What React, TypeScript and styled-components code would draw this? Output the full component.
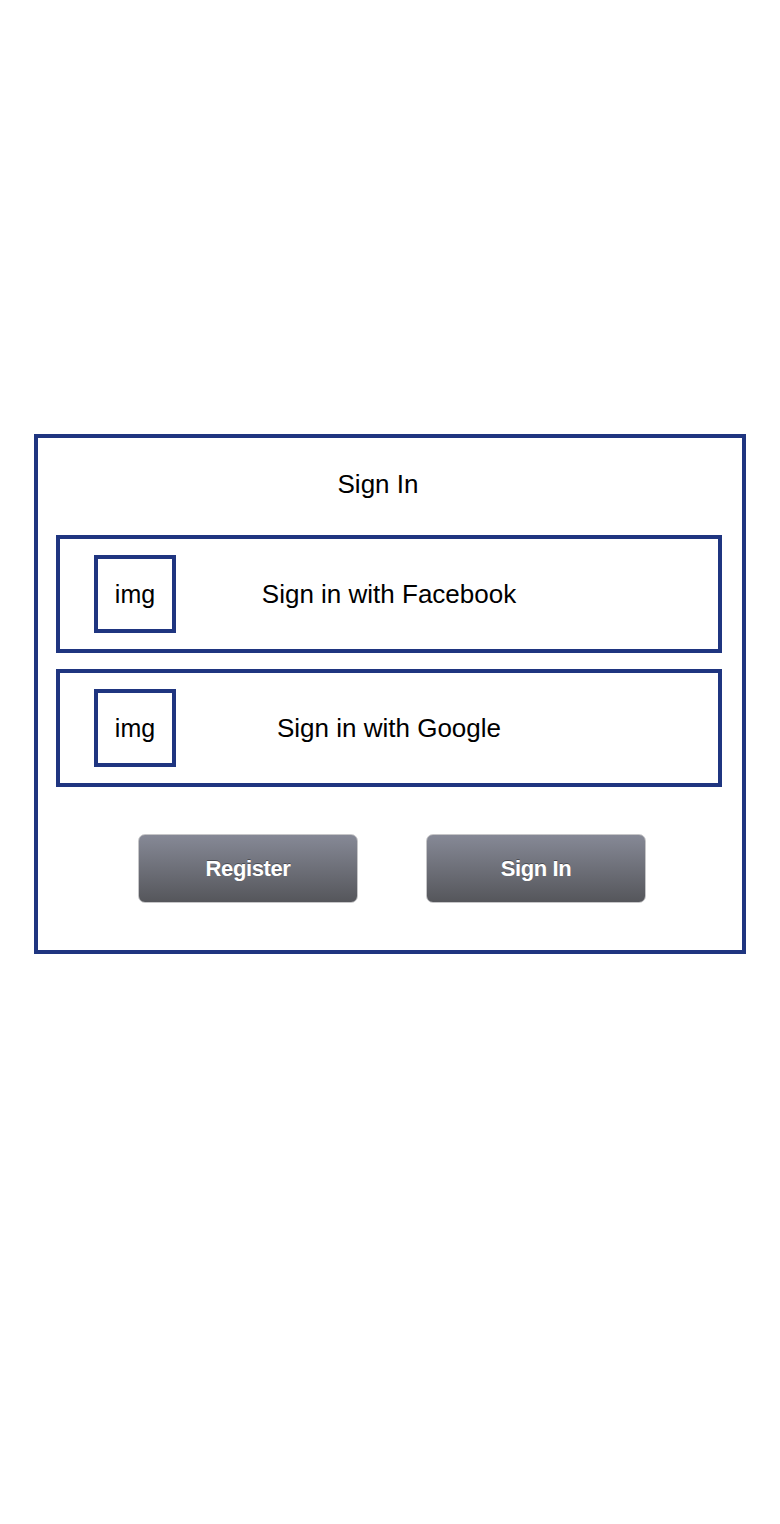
import React from 'react';
import styled, { createGlobalStyle } from 'styled-components';

const GlobalStyle = createGlobalStyle`
  body {
    margin: 0;
    background: #ffffff;
    font-family: "Liberation Sans", Arial, sans-serif;
  }
`;

const Page = styled.div`
  width: 780px;
  min-height: 1524px;
  padding-top: 434px;
  box-sizing: border-box;
`;

const Card = styled.div`
  box-sizing: border-box;
  width: 712px;
  margin: 0 auto;
  padding: 31px 0 47px;
  display: flex;
  flex-direction: column;
  border: 4px solid #1f3580;
`;

const Title = styled.div`
  margin: 0 24px 36px 0;
  font-size: 26px;
  line-height: 30px;
  text-align: center;
  color: #000;
`;

const Providers = styled.div`
  display: flex;
  flex-direction: column;
  gap: 16px;
  margin: 0 20px 0 18px;
`;

const ProviderRow = styled.div`
  box-sizing: border-box;
  height: 118px;
  padding: 0 34px;
  display: grid;
  grid-template-columns: 82px 1fr 82px;
  align-items: center;
  border: 4px solid #1f3580;
`;

const ImgBox = styled.div`
  box-sizing: border-box;
  width: 82px;
  height: 78px;
  display: flex;
  align-items: center;
  justify-content: center;
  border: 4px solid #1f3580;
  font-size: 25px;
  color: #000;
`;

const ProviderLabel = styled.div`
  font-size: 26px;
  text-align: center;
  color: #000;
`;

const Actions = styled.div`
  display: flex;
  justify-content: center;
  gap: 68px;
  margin-top: 47px;
  padding-left: 4px;
`;

const ActionButton = styled.button`
  box-sizing: border-box;
  width: 220px;
  height: 69px;
  border: 1px solid #c6c6c8;
  border-radius: 7px;
  background: linear-gradient(to bottom, #868996, #55565b);
  color: #ffffff;
  font-family: "Liberation Sans", Arial, sans-serif;
  font-size: 22px;
  font-weight: bold;
  letter-spacing: -0.4px;
  text-shadow: 0 -1px 0 rgba(0, 0, 0, 0.35);
  cursor: pointer;
`;

const App: React.FC = () => {
  return (
    <>
      <GlobalStyle />
      <Page>
        <Card>
          <Title>Sign In</Title>
          <Providers>
            <ProviderRow>
              <ImgBox>img</ImgBox>
              <ProviderLabel>Sign in with Facebook</ProviderLabel>
            </ProviderRow>
            <ProviderRow>
              <ImgBox>img</ImgBox>
              <ProviderLabel>Sign in with Google</ProviderLabel>
            </ProviderRow>
          </Providers>
          <Actions>
            <ActionButton>Register</ActionButton>
            <ActionButton>Sign In</ActionButton>
          </Actions>
        </Card>
      </Page>
    </>
  );
};

export default App;
